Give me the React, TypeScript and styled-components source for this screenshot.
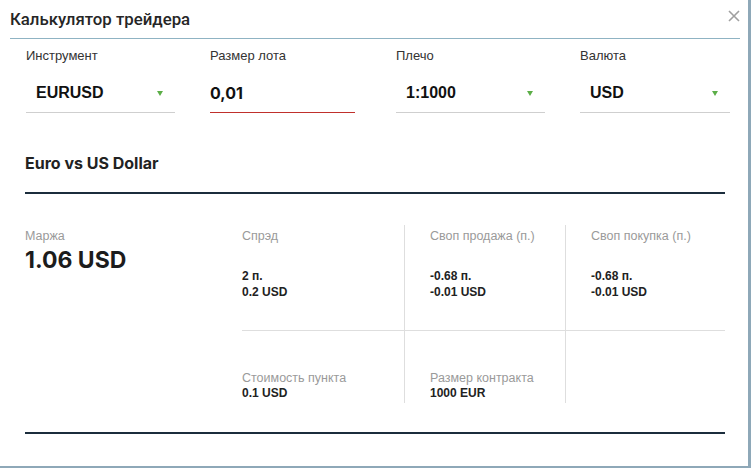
import { createGlobalStyle } from "styled-components";
import styled from "styled-components";

const GlobalStyle = createGlobalStyle`
  html, body {
    margin: 0;
    padding: 0;
    background: #ffffff;
  }
  * {
    box-sizing: border-box;
  }
`;

const Window = styled.div`
  width: 751px;
  height: 468px;
  background: #ffffff;
  border-right: 3px solid #8ea8b8;
  border-bottom: 2px solid #8ea8b8;
  font-family: "Liberation Sans", Arial, sans-serif;
  color: #222;
  overflow: hidden;
`;

const Header = styled.div`
  display: flex;
  align-items: center;
  justify-content: space-between;
  height: 39px;
  margin: 0 8px 0 10px;
  border-bottom: 1px solid #8fb3c3;
`;

const Title = styled.h1`
  margin: 0;
  font-family: Roboto, "Liberation Sans", sans-serif;
  font-size: 16.8px;
  font-weight: 500;
  color: #262626;
`;

const CloseButton = styled.button`
  all: unset;
  display: flex;
  width: 12px;
  height: 12px;
  margin: 0 0 7px 0;
  cursor: pointer;
`;

const Fields = styled.div`
  display: grid;
  grid-template-columns: 184px 186px 184px 150px;
  padding: 9px 0 0 26px;
`;

const Field = styled.div<{ $width: number }>`
  width: ${(p) => p.$width}px;
`;

const Label = styled.div`
  font-size: 13px;
  line-height: 16px;
  color: #333;
`;

const Control = styled.div<{ $active?: boolean }>`
  display: flex;
  align-items: center;
  justify-content: space-between;
  height: 49px;
  padding: 10px 12px 0 ${(p) => (p.$active ? 0 : 10)}px;
  border-bottom: 1px solid ${(p) => (p.$active ? "#c0302c" : "#cfcfcf")};
`;

const Value = styled.span`
  font-size: 16px;
  font-weight: 700;
  color: #111;
`;

const LotValue = styled.span`
  font-family: Inter, "Liberation Sans", sans-serif;
  font-size: 16px;
  font-weight: 700;
  color: #111;
`;

const Arrow = styled.span`
  width: 0;
  height: 0;
  border-left: 3px solid transparent;
  border-right: 3px solid transparent;
  border-top: 5px solid #5cae48;
`;

const SectionTitle = styled.h2`
  margin: 40px 23px 0 25px;
  padding-bottom: 19px;
  border-bottom: 2px solid #1b2d3c;
  font-family: Inter, "Liberation Sans", sans-serif;
  font-size: 16px;
  line-height: 20px;
  font-weight: 700;
  color: #222;
`;

const Body = styled.div`
  display: flex;
  margin: 0 23px 0 25px;
  padding: 31px 0 29px;
  border-bottom: 2px solid #1b2d3c;
`;

const Margin = styled.div`
  width: 217px;
  padding-top: 3px;
`;

const MutedLabel = styled.div`
  font-size: 12.5px;
  line-height: 16px;
  color: #9a9a9a;
`;

const MarginValue = styled.div`
  margin-top: 2px;
  font-family: Inter, "Liberation Sans", sans-serif;
  font-size: 23px;
  line-height: 28px;
  font-weight: 700;
  color: #1c1c1c;
`;

const Grid = styled.div`
  flex: 1;
  display: grid;
  grid-template-columns: 162px 161px 160px;
  grid-template-rows: 106px 72px;
`;

const Cell = styled.div<{ $divided?: boolean; $bottom?: boolean }>`
  display: flex;
  flex-direction: column;
  justify-content: ${(p) => (p.$bottom ? "flex-end" : "flex-start")};
  padding: ${(p) => (p.$bottom ? "0 0 2px" : "3px 0 0")};
  padding-left: ${(p) => (p.$divided ? 25 : 0)}px;
  border-left: ${(p) => (p.$divided ? "1px solid #dedede" : "none")};
  border-bottom: ${(p) => (p.$bottom ? "none" : "1px solid #dedede")};
`;

const Values = styled.div`
  margin-top: 24px;
  font-size: 12px;
  line-height: 16px;
  font-weight: 700;
  color: #222;
`;

const SmallValue = styled.div`
  font-size: 12px;
  line-height: 15px;
  font-weight: 700;
  color: #222;
`;

const fields = [
  { label: "Инструмент", value: "EURUSD", width: 149 },
  { label: "Размер лота", value: "0,01", width: 145, lot: true },
  { label: "Плечо", value: "1:1000", width: 149 },
  { label: "Валюта", value: "USD", width: 150 },
];

const stats = [
  { label: "Спрэд", lines: ["2 п.", "0.2 USD"] },
  { label: "Своп продажа (п.)", lines: ["-0.68 п.", "-0.01 USD"] },
  { label: "Своп покупка (п.)", lines: ["-0.68 п.", "-0.01 USD"] },
];

export default function App() {
  return (
    <>
      <GlobalStyle />
      <Window>
        <Header>
          <Title>Калькулятор трейдера</Title>
          <CloseButton aria-label="Закрыть">
            <svg width="12" height="12" viewBox="0 0 12 12">
              <path
                d="M1 1 L11 11 M11 1 L1 11"
                stroke="#a0a0a0"
                strokeWidth="1.6"
                fill="none"
              />
            </svg>
          </CloseButton>
        </Header>

        <Fields>
          {fields.map((f) => (
            <Field key={f.label} $width={f.width}>
              <Label>{f.label}</Label>
              <Control $active={f.lot}>
                {f.lot ? <LotValue>{f.value}</LotValue> : <Value>{f.value}</Value>}
                {!f.lot && <Arrow />}
              </Control>
            </Field>
          ))}
        </Fields>

        <SectionTitle>Euro vs US Dollar</SectionTitle>

        <Body>
          <Margin>
            <MutedLabel>Маржа</MutedLabel>
            <MarginValue>1.06 USD</MarginValue>
          </Margin>
          <Grid>
            {stats.map((s, i) => (
              <Cell key={s.label} $divided={i > 0}>
                <MutedLabel>{s.label}</MutedLabel>
                <Values>
                  {s.lines.map((l) => (
                    <div key={l}>{l}</div>
                  ))}
                </Values>
              </Cell>
            ))}
            <Cell $bottom>
              <MutedLabel>Стоимость пункта</MutedLabel>
              <SmallValue>0.1 USD</SmallValue>
            </Cell>
            <Cell $bottom $divided>
              <MutedLabel>Размер контракта</MutedLabel>
              <SmallValue>1000 EUR</SmallValue>
            </Cell>
            <Cell $bottom $divided />
          </Grid>
        </Body>
      </Window>
    </>
  );
}
